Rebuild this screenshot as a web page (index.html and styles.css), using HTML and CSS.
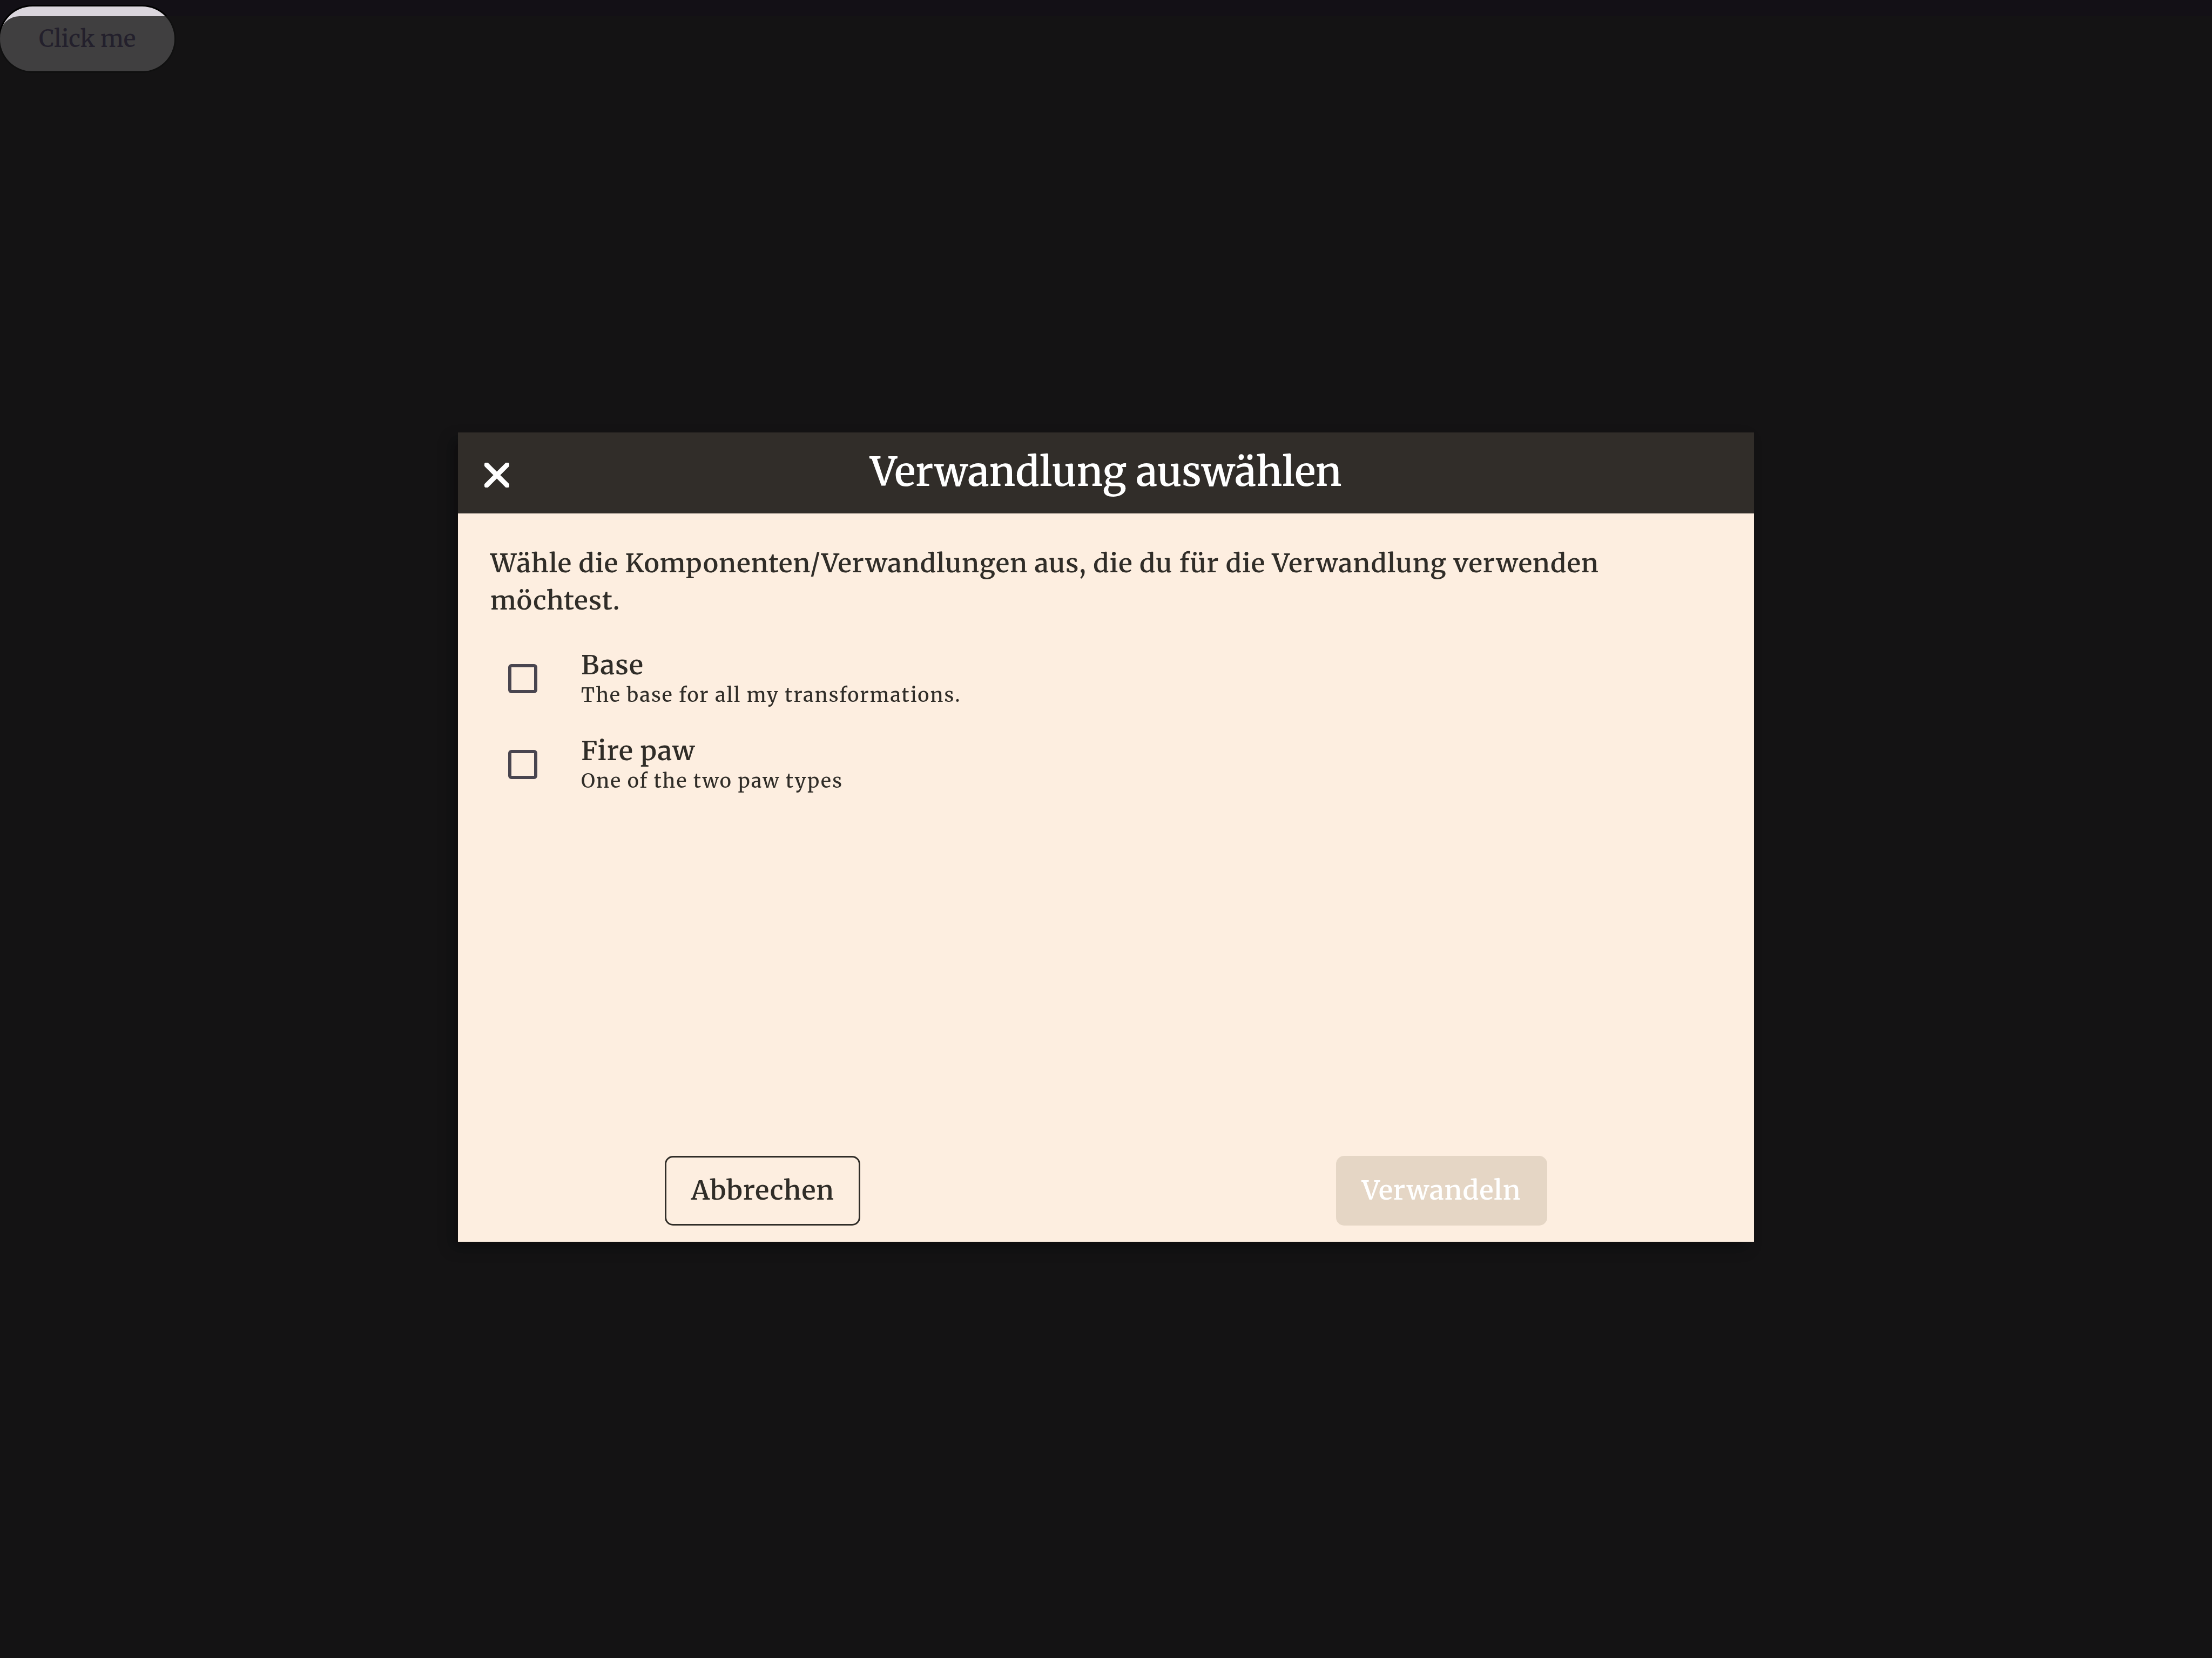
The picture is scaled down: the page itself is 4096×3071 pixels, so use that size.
FILE: index.html
```html
<!DOCTYPE html>
<html lang="de">
<head>
<meta charset="utf-8">
<title>Verwandlung auswählen</title>
<link rel="stylesheet" href="styles.css">
</head>
<body>
<button class="trigger" type="button">Click me</button>
<div class="backdrop">
  <section class="dialog" role="dialog" aria-modal="true" aria-labelledby="dialog-title">
    <header class="dialog-header">
      <button class="close" type="button" aria-label="Schließen">
        <svg viewBox="0 0 46 46" aria-hidden="true"><path d="M4 4L42 42M42 4L4 42"/></svg>
      </button>
      <h1 class="dialog-title" id="dialog-title">Verwandlung auswählen</h1>
    </header>
    <div class="dialog-body">
      <p class="intro">Wähle die Komponenten/Verwandlungen aus, die du für die Verwandlung verwenden möchtest.</p>
      <ul class="options">
        <li class="option">
          <input class="option-box" type="checkbox" id="base">
          <label class="option-label" for="base">
            <span class="option-name">Base</span>
            <span class="option-note">The base for all my transformations.</span>
          </label>
        </li>
        <li class="option">
          <input class="option-box" type="checkbox" id="fire-paw">
          <label class="option-label" for="fire-paw">
            <span class="option-name">Fire paw</span>
            <span class="option-note">One of the two paw types</span>
          </label>
        </li>
      </ul>
    </div>
    <footer class="dialog-actions">
      <button class="action cancel" type="button">Abbrechen</button>
      <button class="action confirm" type="button" disabled>Verwandeln</button>
    </footer>
  </section>
</div>
</body>
</html>
```
FILE: styles.css
```css
* {
  box-sizing: border-box;
}

body {
  margin: 0;
  min-height: 100vh;
  background: #131016;
  font-family: Merriweather, "DejaVu Serif", serif;
  font-weight: 500;
  color: #302d28;
}

button {
  font-family: inherit;
  font-weight: inherit;
}

.trigger {
  display: block;
  margin: 12px 0 0;
  padding: 0 72px;
  height: 120px;
  border: 0;
  border-radius: 60px;
  background: #dad5dc;
  box-shadow: 0 0 0 3px #000;
  color: #584a81;
  font-size: 43px;
}

.backdrop {
  position: fixed;
  inset: 30px 0 0;
  display: flex;
  align-items: center;
  justify-content: center;
  border-top-left-radius: 36px;
  background: rgba(20, 20, 20, 0.78);
}

.dialog {
  display: flex;
  flex-direction: column;
  width: 2400px;
  max-width: 100%;
  min-height: 1499px;
  background: #fdeee0;
  box-shadow: -12px 12px 24px rgba(0, 0, 0, 0.3);
}

.dialog-header {
  display: grid;
  grid-template-columns: 144px 1fr 144px;
  align-items: center;
  height: 150px;
  background: #312d29;
  color: #fff;
}

.close {
  display: flex;
  justify-content: center;
  padding: 8px 0 0;
  border: 0;
  background: none;
  color: inherit;
}

.close svg {
  width: 46px;
  height: 46px;
  fill: none;
  stroke: currentColor;
  stroke-width: 9;
  stroke-linecap: round;
}

.dialog-title {
  margin: 0;
  padding-bottom: 4px;
  font-size: 73px;
  font-weight: 600;
  line-height: 100px;
  text-align: center;
}

.dialog-body {
  flex: 1;
  padding: 58px 60px 0;
}

.intro {
  margin: 0 0 30px;
  padding-right: 120px;
  font-size: 48px;
  font-weight: 600;
  line-height: 69px;
  letter-spacing: 1px;
}

.options {
  margin: 0;
  padding: 0;
  list-style: none;
}

.option {
  display: flex;
  align-items: center;
  gap: 81px;
  height: 159px;
  padding-left: 33px;
}

.option-box {
  appearance: none;
  width: 54px;
  height: 54px;
  margin: 0;
  border: 6px solid #49454f;
  border-radius: 6px;
}

.option-label {
  display: flex;
  flex-direction: column;
  padding-top: 2px;
}

.option-name {
  font-size: 49px;
  font-weight: 600;
  line-height: 60px;
  letter-spacing: 1px;
}

.option-note {
  font-size: 36px;
  line-height: 51px;
  letter-spacing: 2px;
}

.dialog-actions {
  display: flex;
  justify-content: space-around;
  gap: 114px;
  padding-bottom: 30px;
}

.action {
  height: 129px;
  padding: 0 45px 2px;
  border: 3px solid #302d28;
  border-radius: 15px;
  background: none;
  color: #302d28;
  font-size: 49px;
  font-weight: 600;
  letter-spacing: 1px;
}

.confirm {
  border-color: #e5d6c5;
  background: #e5d6c5;
  color: #fff;
}
```
